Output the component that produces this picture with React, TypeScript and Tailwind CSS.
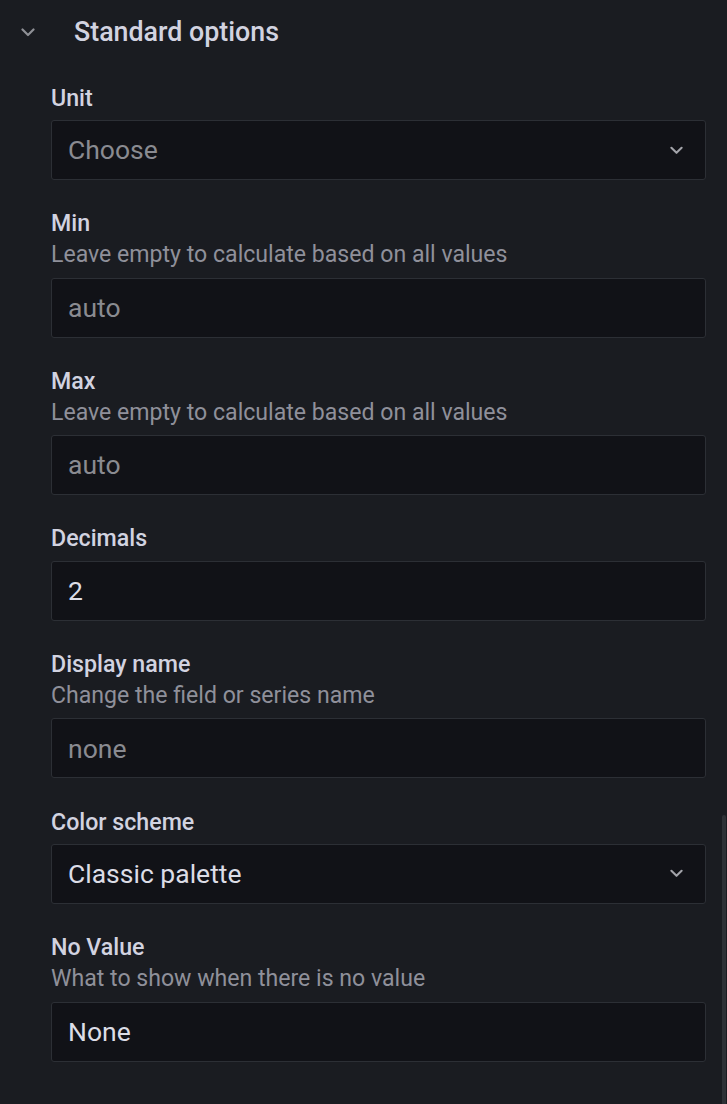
import React from "react";

const font = { fontFamily: "Roboto, 'Noto Sans', sans-serif" };

function Chevron({ className }: { className?: string }) {
  return (
    <svg className={className} width="14" height="9" viewBox="0 0 14 9" fill="none">
      <path d="M1.5 1.5L7 7L12.5 1.5" stroke="currentColor" strokeWidth="2.2" strokeLinecap="round" strokeLinejoin="round" />
    </svg>
  );
}

type Field = {
  label: string;
  desc?: string;
  value: string;
  placeholder?: boolean;
  select?: boolean;
};

const fields: Field[] = [
  { label: "Unit", value: "Choose", placeholder: true, select: true },
  { label: "Min", desc: "Leave empty to calculate based on all values", value: "auto", placeholder: true },
  { label: "Max", desc: "Leave empty to calculate based on all values", value: "auto", placeholder: true },
  { label: "Decimals", value: "2" },
  { label: "Display name", desc: "Change the field or series name", value: "none", placeholder: true },
  { label: "Color scheme", value: "Classic palette", select: true },
  { label: "No Value", desc: "What to show when there is no value", value: "None" },
];

export default function App() {
  return (
    <div className="relative w-[727px] h-[1104px] overflow-hidden bg-[#1a1c21]" style={font}>
      <div className="flex items-center h-[64px] pl-[21px]">
        <Chevron className="text-[#8f9096] w-[14px]" />
        <span className="ml-[39px] text-[26.8px] font-medium text-[#d2d3e0] leading-none">Standard options</span>
      </div>
      <div className="flex flex-col pl-[51px] pr-[21px] pt-[18px]">
        {fields.map((f) => (
          <div key={f.label} className="flex flex-col mb-[27.6px]">
            <div className="h-[32px] flex items-center text-[23.2px] font-medium text-[#d2d3e0]">{f.label}</div>
            {f.desc && (
              <div className="h-[32px] flex items-center text-[23.1px] text-[#8f909a]">{f.desc}</div>
            )}
            <div className="mt-[6px] h-[60px] flex items-center justify-between rounded-[3px] border border-[#2c2f35] bg-[#111217] pl-[16px] pr-[22px]">
              <span className={`text-[26.5px] ${f.placeholder ? "text-[#8a8b91]" : "text-[#dcdde6]"}`}>{f.value}</span>
              {f.select && <Chevron className="text-[#a3a4aa] w-[13px]" />}
            </div>
          </div>
        ))}
      </div>
      <div className="absolute right-[1px] top-[815px] w-[4px] h-[300px] rounded-t-[2px] bg-[#2e3136]" />
    </div>
  );
}
